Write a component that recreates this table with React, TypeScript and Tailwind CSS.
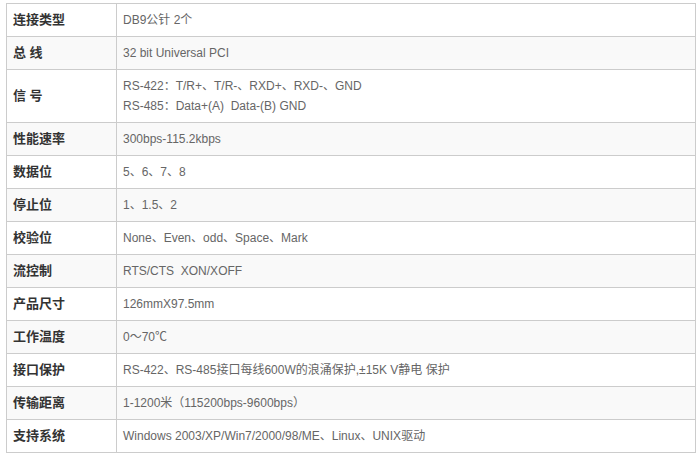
const rows: { label: string; value: string[] }[] = [
  { label: '连接类型', value: ['DB9公针 2个'] },
  { label: '总 线', value: ['32 bit Universal PCI'] },
  { label: '信 号', value: ['RS-422：T/R+、T/R-、RXD+、RXD-、GND', 'RS-485：Data+(A)  Data-(B) GND'] },
  { label: '性能速率', value: ['300bps-115.2kbps'] },
  { label: '数据位', value: ['5、6、7、8'] },
  { label: '停止位', value: ['1、1.5、2'] },
  { label: '校验位', value: ['None、Even、odd、Space、Mark'] },
  { label: '流控制', value: ['RTS/CTS  XON/XOFF'] },
  { label: '产品尺寸', value: ['126mmX97.5mm'] },
  { label: '工作温度', value: ['0～70℃'] },
  { label: '接口保护', value: ['RS-422、RS-485接口每线600W的浪涌保护,±15K V静电 保护'] },
  { label: '传输距离', value: ['1-1200米（115200bps-9600bps）'] },
  { label: '支持系统', value: ['Windows 2003/XP/Win7/2000/98/ME、Linux、UNIX驱动'] },
]

export default function App() {
  return (
    <div className="min-h-[457px] bg-white pl-[6px] pt-[3px] font-['Liberation_Sans','Noto_Sans_CJK_SC',sans-serif]">
      <div className="w-[690px] border-t border-l border-[#cccccc]">
        {rows.map((r, i) => (
          <div
            key={r.label}
            className={`flex border-b border-[#cccccc] ${i % 2 === 1 ? 'bg-[#f9f9f9]' : 'bg-white'} ${r.value.length > 1 ? 'h-[53px]' : 'h-[33px]'}`}
          >
            <div className="w-[110px] shrink-0 border-r border-[#cccccc] pl-[6px] flex items-center text-[13px] font-bold text-[#333333] whitespace-pre">
              {r.label}
            </div>
            <div className="flex-1 border-r border-[#cccccc] pl-[6px] flex flex-col justify-center text-[12px] leading-[20px] text-[#666666]">
              {r.value.map(v => (
                <div key={v} className="whitespace-pre">{v}</div>
              ))}
            </div>
          </div>
        ))}
      </div>
    </div>
  )
}
